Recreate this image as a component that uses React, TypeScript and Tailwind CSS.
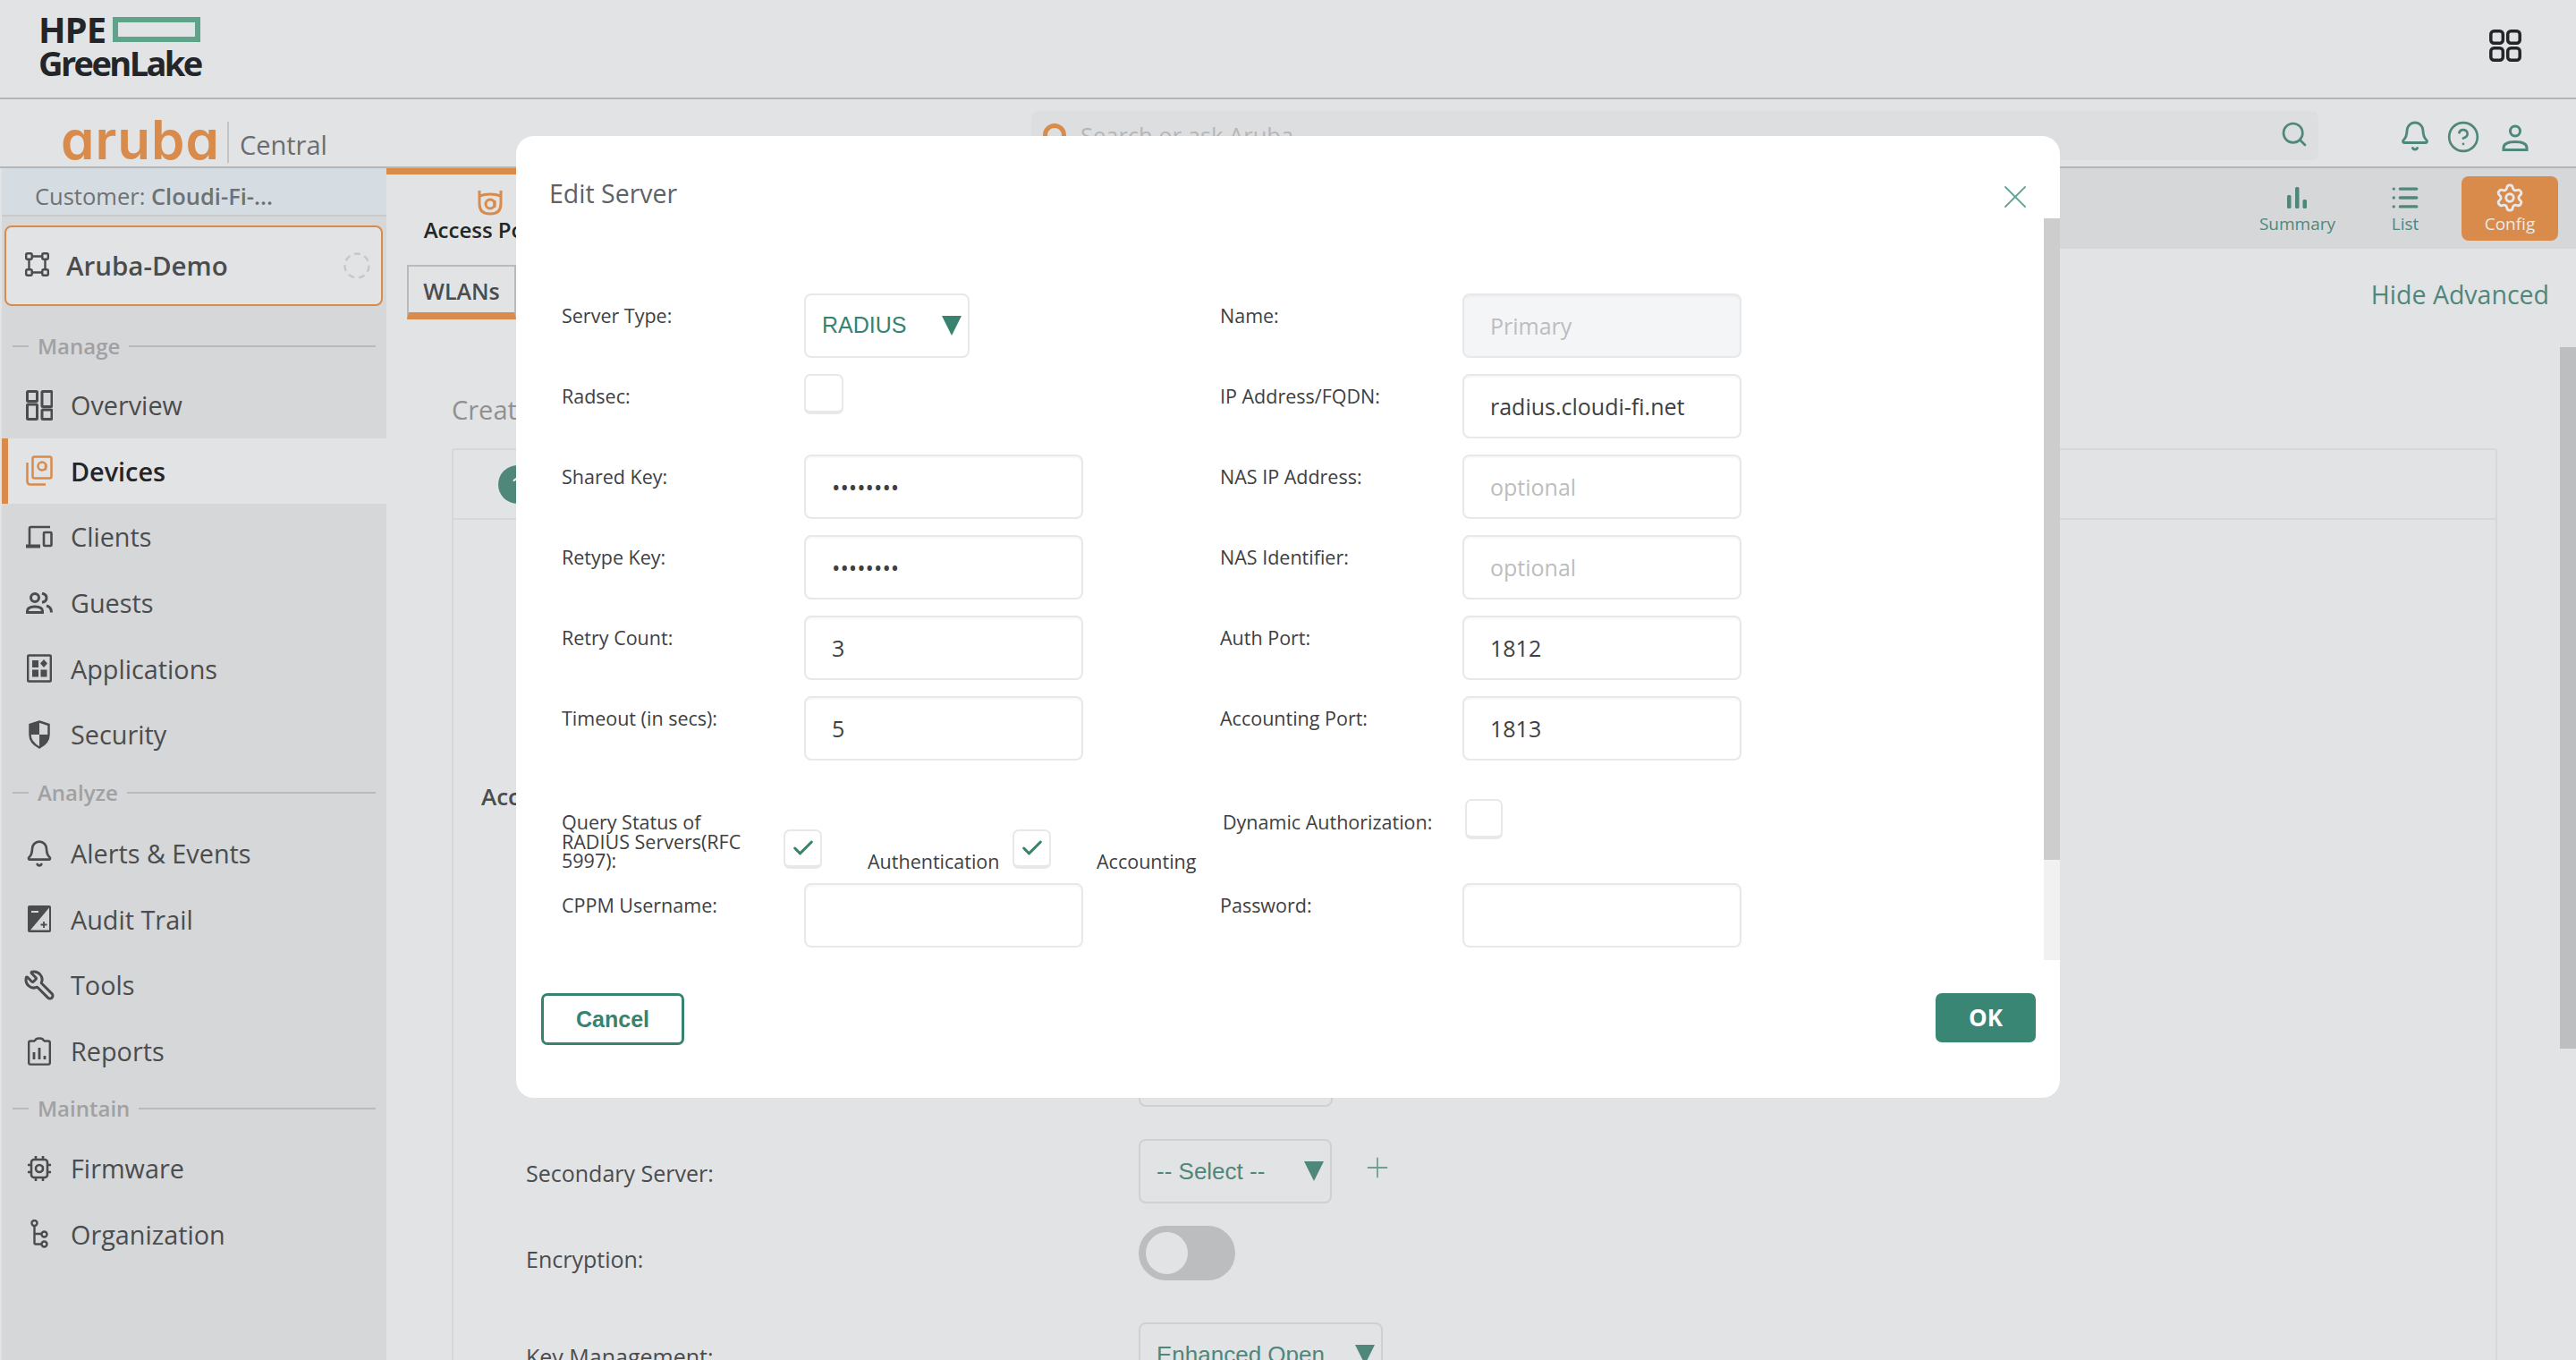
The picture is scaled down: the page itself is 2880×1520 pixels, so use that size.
import React from 'react';
import { Bell, Check, CircleHelp, List, Plus, Search, Settings, Wrench, X } from 'lucide-react';

const ink = '#4a4c4e';

function OverviewIcon() {
  return (
    <svg width="30" height="34" viewBox="0 0 30 34" fill="none" stroke={ink} strokeWidth="3">
      <rect x="1.500" y="1.500" width="11" height="11" rx="1" />
      <rect x="1.500" y="16" width="11" height="16.500" rx="1" />
      <rect x="18" y="1.500" width="11" height="17" rx="1" />
      <rect x="18" y="22" width="11" height="10.500" rx="1" />
    </svg>
  );
}

function DevicesIcon() {
  return (
    <svg width="30" height="34" viewBox="0 0 30 34" fill="none" stroke="#d88b4b" strokeWidth="2.500">
      <rect x="7.500" y="1.500" width="21" height="24" rx="2" />
      <circle cx="18" cy="12" r="4.500" />
      <path d="M22 9v7.500" />
      <path d="M1.500 8v21q0 3.500 3.500 3.500h17" />
    </svg>
  );
}

function ClientsIcon() {
  return (
    <svg width="30" height="26" viewBox="0 0 30 26" fill="none" stroke={ink} strokeWidth="2.600">
      <path d="M4 22V3.500q0-1.500 1.500-1.500H27" />
      <path d="M0 23.500h16" strokeWidth="4" />
      <rect x="20" y="8" width="8.500" height="15" rx="1" />
    </svg>
  );
}

function GuestsIcon() {
  return (
    <svg width="30" height="24" viewBox="0 0 30 24" fill="none" stroke={ink} strokeWidth="3">
      <circle cx="10" cy="6" r="4.500" />
      <path d="M1.500 22.500v-1.500q0-5 8.500-5t8.500 5v1.500z" />
      <path d="M18 1.200q5 .8 5 5t-5 5" />
      <path d="M23 15q5.500 1.500 5.500 7.500" />
    </svg>
  );
}

function ApplicationsIcon() {
  return (
    <svg width="28" height="32" viewBox="0 0 28 32" fill={ink}>
      <rect x="1.200" y="1.500" width="25.600" height="29" rx="1" fill="none" stroke={ink} strokeWidth="2.400" />
      <rect x="6" y="7" width="7" height="8" />
      <path d="M19 6l4 4.500-4 4.500-4-4.500z" />
      <rect x="6" y="17.500" width="7" height="8" />
      <rect x="15.500" y="17.500" width="7" height="8" />
    </svg>
  );
}

function SecurityIcon() {
  return (
    <svg width="24" height="32" viewBox="0 0 24 32">
      <path d="M12 1.500 22.500 5v11q0 9-10.500 14.500Q1.500 25 1.500 16V5z" fill="none" stroke={ink} strokeWidth="2.500" />
      <path d="M12 1.500v14.500H1.500V5zM12 16h10.500q0 9-10.500 14.500z" fill={ink} />
    </svg>
  );
}

function AuditIcon() {
  return (
    <svg width="26" height="30" viewBox="0 0 26 30">
      <rect width="26" height="30" rx="2" fill={ink} />
      <path d="M24 2.500v25H3z" fill="#d6d7d9" />
      <path d="M4 7h8" stroke="#d6d7d9" strokeWidth="2" />
      <path d="M14.500 21.500h7M18 18v7" stroke={ink} strokeWidth="1.800" />
    </svg>
  );
}

function ReportsIcon() {
  return (
    <svg width="26" height="32" viewBox="0 0 26 32" fill="none" stroke={ink} strokeWidth="2.400">
      <path d="M8 4.500H3q-1.800 0-1.800 1.800v22.500q0 1.800 1.800 1.800h20q1.800 0 1.800-1.800V6.300q0-1.800-1.800-1.800h-5" />
      <path d="M8 5q0-3.500 5-3.500T18 5" />
      <path d="M7 25v-8M13 25V12M19 25v-4" strokeWidth="2.800" />
    </svg>
  );
}

function FirmwareIcon() {
  return (
    <svg width="26" height="30" viewBox="0 0 26 30" fill="none" stroke={ink} strokeWidth="2.600">
      <rect x="4" y="5" width="18" height="20" rx="3" />
      <circle cx="13" cy="15" r="4" />
      <path d="M16.800 12v6" strokeWidth="1.800" />
      <path d="M9 1v3M17 1v3M9 26v3M17 26v3M0 11h3M0 19h3M23 11h3M23 19h3" />
    </svg>
  );
}

function OrganizationIcon() {
  return (
    <svg width="20" height="32" viewBox="0 0 20 32" fill="none" stroke={ink} strokeWidth="2.400">
      <circle cx="4.500" cy="4" r="3" />
      <path d="M4.500 7v19q0 1.500 1.500 1.500h6M4.500 16h7.500" />
      <circle cx="15.500" cy="16.500" r="3" />
      <circle cx="15.500" cy="27.500" r="3" />
    </svg>
  );
}

function Triangle({ color }: { color: string }) {
  return (
    <svg width="22" height="22" viewBox="0 0 22 22">
      <path d="M0 0h22L11 22z" fill={color} />
    </svg>
  );
}

const manage = [
  { name: 'Overview', icon: <OverviewIcon /> },
  { name: 'Devices', icon: <DevicesIcon />, active: true },
  { name: 'Clients', icon: <ClientsIcon /> },
  { name: 'Guests', icon: <GuestsIcon /> },
  { name: 'Applications', icon: <ApplicationsIcon /> },
  { name: 'Security', icon: <SecurityIcon /> },
];

const analyze = [
  { name: 'Alerts & Events', icon: <Bell size={32} strokeWidth={2} color={ink} /> },
  { name: 'Audit Trail', icon: <AuditIcon /> },
  { name: 'Tools', icon: <Wrench size={36} strokeWidth={2} color={ink} className="-scale-x-100" /> },
  { name: 'Reports', icon: <ReportsIcon /> },
];

const maintain = [
  { name: 'Firmware', icon: <FirmwareIcon /> },
  { name: 'Organization', icon: <OrganizationIcon /> },
];

function NavItem({ name, icon, active }: { name: string; icon: React.ReactNode; active?: boolean }) {
  return (
    <div
      className={`flex h-[73.600px] items-center ${
        active ? 'border-l-[7px] border-[#d88b4b] bg-[#e2e3e5] font-semibold text-[#232528]' : 'pl-[7px] text-[#4a4c4e]'
      } text-[28.800px]`}
    >
      <span className="flex w-[70px] shrink-0 justify-center pl-[13px] pr-[13px]">{icon}</span>
      {name}
    </div>
  );
}

function NavHeading({ children, className }: { children: string; className?: string }) {
  return (
    <div className={`flex h-[56px] items-center pl-[12px] pr-[12px] text-[24px] font-semibold text-[#a0a1a3] ${className ?? ''}`}>
      <span className="h-[2px] w-[18px] bg-[#b9babc]" />
      <span className="px-[10px]">{children}</span>
      <span className="h-[2px] flex-1 bg-[#b9babc]" />
    </div>
  );
}

function Field({
  label,
  value,
  placeholder,
  type,
  disabled,
}: {
  label: string;
  value?: string;
  placeholder?: string;
  type?: string;
  disabled?: boolean;
}) {
  return (
    <div className="mb-[17px] flex h-[73px]">
      <label className="mt-[10px] h-[30px] w-[271px] shrink-0 text-[21.500px] leading-[30px] text-[#3e4042]">{label}</label>
      <input
        readOnly
        type={type ?? 'text'}
        value={value ?? ''}
        placeholder={placeholder}
        className={`h-[72px] w-[312px] rounded-[8px] border-2 border-[#e8e8ea] px-[29px] text-[25px] text-[#3e4042] shadow-[inset_0_2px_2px_rgba(0,0,0,0.03)] outline-none placeholder:text-[#bcbdbf] ${
          disabled ? 'bg-[#f4f5f7]' : 'bg-white'
        }`}
      />
    </div>
  );
}

function Tick({ checked, className }: { checked?: boolean; className?: string }) {
  return (
    <span
      className={`flex items-center justify-center rounded-[7px] border-2 border-b-[4px] border-[#e8e8ea] bg-white ${className ?? ''}`}
    >
      {checked && <Check size={28} strokeWidth={2.600} color="#38836f" />}
    </span>
  );
}

function ViewTab({ label, icon, active, className }: { label: string; icon: React.ReactNode; active?: boolean; className?: string }) {
  return (
    <div
      className={`flex h-[72px] flex-col items-center justify-start rounded-[8px] pt-[7px] text-[19px] leading-[26px] ${
        active ? 'w-[108px] bg-[#d88b4b] text-[#e8e9eb]' : 'text-[#4f877b]'
      } ${className ?? ''}`}
    >
      <span className="flex h-[33px] items-center">{icon}</span>
      <span className="font-medium">{label}</span>
    </div>
  );
}

function ServerModal() {
  return (
    <div className="absolute left-[577px] top-[152px] flex h-[1075px] w-[1726px] flex-col rounded-[20px] bg-white">
      <div className="flex h-[92px] shrink-0 items-start justify-between pl-[37px] pr-[28px]">
        <span className="mt-[44px] text-[28.500px] leading-[40px] text-[#5f6164]">Edit Server</span>
        <X size={44} strokeWidth={1} color="#5fa596" className="mt-[46px]" />
      </div>

      <div className="relative h-[829px] shrink-0 overflow-hidden pt-[84px]">
        <div className="absolute right-0 top-0 h-full w-[18px] bg-[#f1f1f1]">
          <div className="h-[717px] bg-[#cdcdcd]" />
        </div>
        <div className="flex">
          <div className="ml-[51px] w-[736px]">
            <div className="mb-[17px] flex h-[73px]">
              <label className="mt-[10px] h-[30px] w-[271px] text-[21.500px] leading-[30px] text-[#3e4042]">Server Type:</label>
              <div className="flex h-[72px] w-[185px] items-center justify-between rounded-[8px] border-2 border-[#e8e8ea] pl-[18px] pr-[7px] font-['Liberation_Sans',sans-serif] text-[25px] text-[#38836f]">
                RADIUS
                <Triangle color="#38836f" />
              </div>
            </div>
            <div className="mb-[17px] flex h-[73px]">
              <label className="mt-[10px] h-[30px] w-[271px] text-[21.500px] leading-[30px] text-[#3e4042]">Radsec:</label>
              <Tick className="h-[45px] w-[44px]" />
            </div>
            <Field label="Shared Key:" value="password" type="password" />
            <Field label="Retype Key:" value="password" type="password" />
            <Field label="Retry Count:" value="3" />
            <Field label="Timeout (in secs):" value="5" />
            <div className="flex h-[119px] text-[21.500px] text-[#3e4042]">
              <span className="mt-[40px] h-fit w-[210px] leading-[21.500px]">Query Status of RADIUS Servers(RFC 5997):</span>
              <Tick checked className="ml-[38px] mt-[59px] h-[44px] w-[43px]" />
              <span className="ml-[51px] mt-[80px] h-[30px] w-[148px] leading-[30px]">Authentication</span>
              <Tick checked className="ml-[14px] mt-[59px] h-[44px] w-[43px]" />
              <span className="ml-[51px] mt-[80px] h-[30px] leading-[30px]">Accounting</span>
            </div>
            <Field label="CPPM Username:" />
          </div>
          <div className="w-[800px]">
            <Field label="Name:" placeholder="Primary" disabled />
            <Field label="IP Address/FQDN:" value="radius.cloudi-fi.net" />
            <Field label="NAS IP Address:" placeholder="optional" />
            <Field label="NAS Identifier:" placeholder="optional" />
            <Field label="Auth Port:" value="1812" />
            <Field label="Accounting Port:" value="1813" />
            <div className="flex h-[119px] text-[21.500px] text-[#3e4042]">
              <span className="ml-[3px] mt-[36px] h-[30px] w-[271px] leading-[30px]">Dynamic Authorization:</span>
              <Tick className="mt-[25px] h-[45px] w-[42px]" />
            </div>
            <Field label="Password:" />
          </div>
        </div>
      </div>

      <div className="flex flex-1 items-start justify-between pl-[28px] pr-[27px] pt-[37px] font-['Liberation_Sans',sans-serif]">
        <button className="h-[58px] w-[160px] rounded-[7px] border-[3px] border-[#38836f] pt-[2px] text-[25px] font-bold text-[#38836f]">
          Cancel
        </button>
        <button className="h-[55px] w-[112px] rounded-[7px] bg-[#3a8674] font-['Open_Sans',sans-serif] text-[26px] font-bold text-white">
          OK
        </button>
      </div>
    </div>
  );
}

export default function App() {
  return (
    <div className="relative flex h-[1520px] w-[2880px] flex-col overflow-hidden bg-[#e2e3e5] font-['Open_Sans',sans-serif]">
      {/* top bar */}
      <header className="flex h-[111px] shrink-0 items-start justify-between border-b-2 border-[#b4b5b7] pl-[43px] pr-[61px]">
        <div className="pt-[14px] font-bold text-[#232528]">
          <div className="flex h-[38px] items-center">
            <span className="text-[40px] leading-[38px] tracking-[-1px]">HPE</span>
            <span className="ml-[8px] h-[28px] w-[98px] border-[6px] border-[#5fa48a]" />
          </div>
          <div className="text-[38px] leading-[36px] tracking-[-2.600px]">GreenLake</div>
        </div>
        <svg width="36" height="36" viewBox="0 0 36 36" fill="none" stroke="#232528" strokeWidth="3.500" className="mt-[33px]">
          <rect x="1.800" y="1.800" width="13.500" height="13.500" rx="3.500" />
          <rect x="20.700" y="1.800" width="13.500" height="13.500" rx="3.500" />
          <rect x="1.800" y="20.700" width="13.500" height="13.500" rx="3.500" />
          <rect x="20.700" y="20.700" width="13.500" height="13.500" rx="3.500" />
        </svg>
      </header>

      <div className="flex h-[77px] shrink-0 border-b-2 border-[#b4b5b7]">
        <div className="flex w-[1153px] shrink-0 items-start pl-[68px]">
          <span className="mt-[10px] font-['Inter',sans-serif] text-[60px] font-semibold leading-[70px] tracking-[1px] text-[#d88b4b] [font-feature-settings:'cv11']">
            aruba
          </span>
          <span className="ml-[8px] mt-[25px] h-[46px] w-[2px] bg-[#c2c3c5]" />
          <span className="ml-[12px] mt-[31px] text-[29px] leading-[40px] text-[#6a6d70]">Central</span>
        </div>
        <div className="mt-[13px] flex h-[55px] w-[1439px] items-start rounded-[7px] bg-[#dddee0] pl-[13px] pr-[11px]">
          <span className="mt-[14px] h-[26px] w-[26px] rounded-full border-[5px] border-[#d88b4b]" />
          <span className="ml-[16px] mt-[10px] text-[25.500px] leading-[34px] text-[#b5b6b8]">Search or ask Aruba</span>
          <Search size={32} strokeWidth={2} color="#4f877b" className="ml-auto mt-[10px]" />
        </div>
        <div className="ml-[90px] mt-[23px] flex items-start">
          <Bell size={36} strokeWidth={1.900} color="#4f877b" />
          <CircleHelp size={38} strokeWidth={1.700} color="#4f877b" className="ml-[17px]" />
          <svg width="30" height="30" viewBox="0 0 30 30" fill="none" stroke="#4f877b" strokeWidth="3" className="ml-[24px] mt-[5px]">
            <circle cx="15" cy="7.500" r="5.500" />
            <path d="M2 28.500v-2q0-7 13-7t13 7v2z" />
          </svg>
        </div>
      </div>

      <div className="flex min-h-0 flex-1">
        {/* sidebar */}
        <aside className="w-[432px] shrink-0 border-l-2 border-[#e2e3e5] bg-[#d6d7d9]">
          <div className="flex h-[54px] items-center border-b-2 border-[#c9cacc] bg-[#d5dde3] pl-[37px] pt-[10px] text-[25.500px] text-[#6f7173]">
            Customer:&nbsp;<span className="font-semibold">Cloudi-Fi-...</span>
          </div>
          <div className="ml-[3px] mt-[10px] flex h-[90px] w-[423px] items-center rounded-[8px] border-2 border-[#d88b4b] bg-[#e2e3e5] pl-[21px] pr-[12px] text-[29.500px] font-semibold text-[#4a4c4e]">
            <svg width="27" height="27" viewBox="0 0 27 27" fill="none" stroke={ink} strokeWidth="2.400" className="-mt-[4px]">
              <rect x="1.200" y="1.200" width="6.500" height="6.500" rx="1.500" />
              <rect x="19.300" y="1.200" width="6.500" height="6.500" rx="1.500" />
              <rect x="1.200" y="19.300" width="6.500" height="6.500" rx="1.500" />
              <rect x="19.300" y="19.300" width="6.500" height="6.500" rx="1.500" />
              <path d="M7.700 4.500h11.600M7.700 22.500h11.600M4.500 7.700v11.600M22.500 7.700v11.600" />
            </svg>
            <span className="ml-[19px]">Aruba-Demo</span>
            <svg width="30" height="30" viewBox="0 0 30 30" fill="none" stroke="#c6c7c9" strokeWidth="2.400" strokeDasharray="7 5" className="ml-auto">
              <circle cx="15" cy="15" r="13.500" />
            </svg>
          </div>
          <div className="mt-[17px]">
            <NavHeading className="mb-[1px]">Manage</NavHeading>
            {manage.map((m) => (
              <NavItem key={m.name} {...m} />
            ))}
            <NavHeading className="mb-[3.500px]">Analyze</NavHeading>
            {analyze.map((m) => (
              <NavItem key={m.name} {...m} />
            ))}
            <NavHeading className="mb-[1.500px]">Maintain</NavHeading>
            {maintain.map((m) => (
              <NavItem key={m.name} {...m} />
            ))}
          </div>
        </aside>

        <main className="relative min-w-0 flex-1">
          {/* tab strip */}
          <div className="flex h-[90px] bg-[#d6d7d9]">
            <div className="flex w-[236px] flex-col items-center border-t-[7px] border-[#d88b4b] bg-[#e2e3e5] pt-[18px] text-[24px] font-semibold leading-[30px] text-[#232528]">
              <svg width="28" height="28" viewBox="0 0 28 28" fill="none" stroke="#d88b4b" strokeWidth="3" className="mr-[4px]">
                <path d="M2 0v15q0 11 12 11t12-11V0" />
                <path d="M2 6q12-4 24 0" />
                <circle cx="14" cy="15" r="5" />
                <path d="M19 11v8" />
              </svg>
              <span className="ml-[3px] mt-[1px] whitespace-nowrap">Access Points</span>
            </div>
            <div className="ml-auto flex items-start gap-[46px] pr-[20px] pt-[9px]">
              <ViewTab
                className="mr-[15px]"
                label="Summary"
                icon={
                  <svg width="22" height="24" viewBox="0 0 22 24" fill="#4f877b">
                    <rect x="0" y="9" width="4.500" height="15" rx="1.500" />
                    <rect x="9" y="0" width="4.500" height="24" rx="1.500" />
                    <rect x="17.500" y="14" width="4.500" height="10" rx="1.500" />
                  </svg>
                }
              />
              <ViewTab label="List" icon={<List size={34} strokeWidth={2.400} color="#4f877b" />} />
              <ViewTab active label="Config" icon={<Settings size={34} strokeWidth={2} color="#e8e9eb" />} />
            </div>
          </div>

          <div className="flex items-start justify-between pl-[23px] pr-[30px] pt-[18px]">
            <div className="flex h-[61px] w-[122px] items-center justify-center border-2 border-b-[8px] border-[#b9babc] border-b-[#d88b4b] pt-[4px] text-[25px] font-semibold text-[#4a4c4e]">
              WLANs
            </div>
            <span className="mt-[13px] text-[28.500px] leading-[40px] text-[#4f877b]">Hide Advanced</span>
          </div>

          {/* wizard card behind the modal */}
          <div className="ml-[73px] mr-[88px] mt-[81px]">
            <div className="h-[40px] text-[29px] leading-[40px] text-[#8f9092]">Create a New Network</div>
            <div className="mt-[23px] flex h-[80px] items-center rounded-t-[4px] border-2 border-[#d6d7d9] pl-[50px]">
              <span className="flex h-[43px] w-[43px] items-center justify-center rounded-full bg-[#4f877b] text-[26px] text-white">1</span>
            </div>
            <div className="h-[940px] border-x-2 border-[#d6d7d9] pl-[31px] pt-[289px] text-[25px] text-[#4a4c4e]">
              <div className="h-[40px] text-[26px] font-semibold leading-[40px]">Access Rules</div>
              <div className="mt-[255px] flex h-[72px] pl-[50px]">
                <span className="mt-[18px] w-[685px]">Primary Server:</span>
                <div className="h-[72px] w-[217px] rounded-[8px] border-2 border-[#cfd0d2]" />
              </div>
              <div className="mt-[36px] flex h-[72px] pl-[50px]">
                <span className="mt-[20px] w-[685px]">Secondary Server:</span>
                <div className="flex h-[72px] w-[216px] items-center justify-between rounded-[8px] border-2 border-[#cfd0d2] pl-[18px] pr-[7px] font-['Liberation_Sans',sans-serif] text-[26px] text-[#4f877b]">
                  -- Select --
                  <Triangle color="#4f877b" />
                </div>
                <Plus size={36} strokeWidth={1.200} color="#6f9f95" className="ml-[33px] mt-[14px]" />
              </div>
              <div className="mt-[25px] flex h-[61px] pl-[50px]">
                <span className="mt-[19px] w-[685px]">Encryption:</span>
                <span className="flex h-[61px] w-[108px] items-center rounded-full bg-[#bcbdbf] pl-[8px]">
                  <span className="h-[47px] w-[47px] rounded-full bg-[#e2e3e5]" />
                </span>
              </div>
              <div className="mt-[47px] flex h-[72px] pl-[50px]">
                <span className="mt-[20px] w-[685px]">Key Management:</span>
                <div className="flex h-[72px] w-[273px] items-center justify-between rounded-[8px] border-2 border-[#cfd0d2] pl-[18px] pr-[7px] font-['Liberation_Sans',sans-serif] text-[26px] text-[#4f877b]">
                  Enhanced Open
                  <Triangle color="#4f877b" />
                </div>
              </div>
            </div>
          </div>

          <div className="absolute right-0 top-[200px] h-[784px] w-[18px] bg-[#bdbebf]" />
        </main>
      </div>

      <ServerModal />
    </div>
  );
}
